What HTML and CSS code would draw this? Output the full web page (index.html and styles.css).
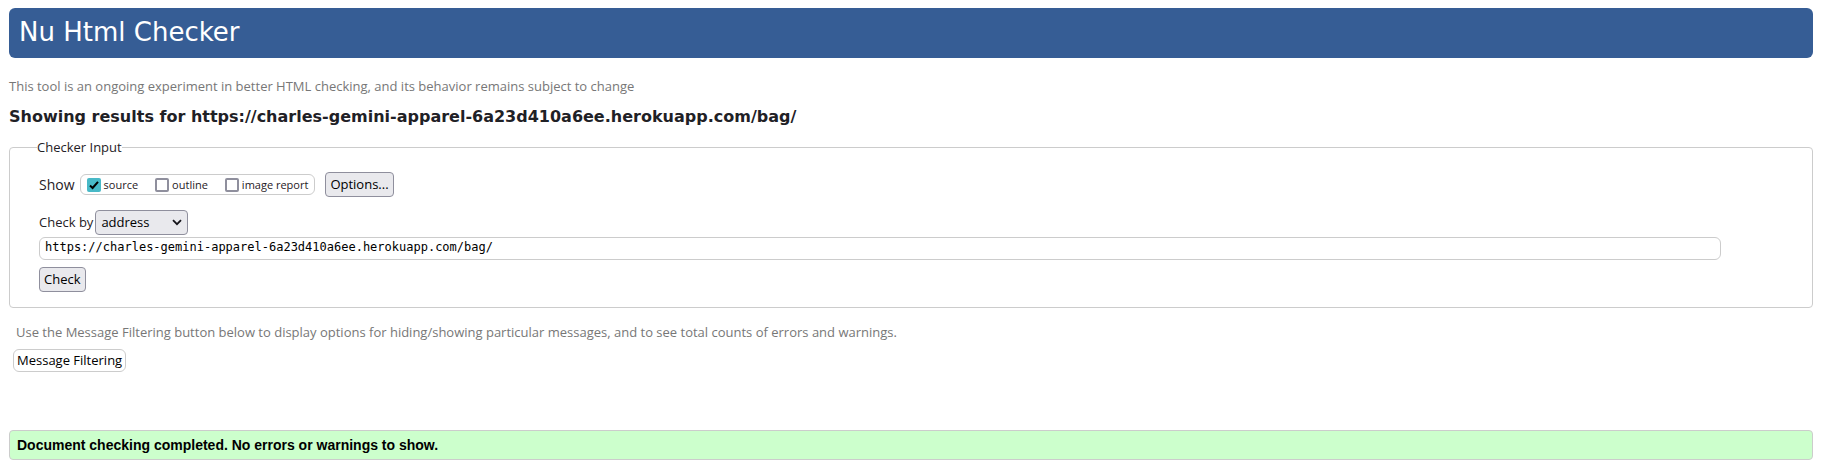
FILE: index.html
```html
<!DOCTYPE html>
<html lang="en">
<head>
<meta charset="utf-8">
<title>Nu Html Checker</title>
<link rel="stylesheet" href="styles.css">
</head>
<body>
<header class="banner"><h1 class="banner-title">Nu Html Checker</h1></header>
<p class="note">This tool is an ongoing experiment in better HTML checking, and its behavior remains subject to change</p>
<h2 class="results-title">Showing results for https://charles-gemini-apparel-6a23d410a6ee.herokuapp.com/bag/</h2>
<form>
  <fieldset class="checker">
    <legend class="legend">Checker Input</legend>
    <div class="show-row">
      <span class="show-label">Show</span>
      <div class="checks">
        <label class="check"><input class="box" type="checkbox" checked>source</label>
        <label class="check"><input class="box" type="checkbox">outline</label>
        <label class="check"><input class="box" type="checkbox">image report</label>
      </div>
      <button class="button" type="button">Options...</button>
    </div>
    <div class="method-row">
      <label for="method">Check by</label>
      <div class="select-wrap">
        <select class="select" id="method"><option>address</option><option>file upload</option><option>text input</option></select>
        <svg class="chevron" viewBox="0 0 10 7" aria-hidden="true"><path d="M1 1.2 5 5.2 9 1.2" fill="none" stroke="#15141a" stroke-width="1.8"/></svg>
      </div>
    </div>
    <input class="address" type="url" aria-label="Address" value="https://charles-gemini-apparel-6a23d410a6ee.herokuapp.com/bag/">
    <button class="button" type="button">Check</button>
  </fieldset>
</form>
<main>
  <p class="note note-filter">Use the Message Filtering button below to display options for hiding/showing particular messages, and to see total counts of errors and warnings.</p>
  <button class="filter-button" type="button">Message Filtering</button>
  <p class="success">Document checking completed. No errors or warnings to show.</p>
</main>
</body>
</html>
```
FILE: styles.css
```css
* { box-sizing: border-box; }
body {
  margin: 8px 8px 8px 9px;
  background: #fff;
  color: #1f2126;
  font: 13px/19px "Open Sans", "Noto Sans", sans-serif;
}
button, input, select { font: inherit; margin: 0; }
.banner {
  padding: 9px 10px 11px;
  border-radius: 6px;
  background: #365d95;
}
.banner-title {
  margin: 0;
  color: #fff;
  font: 26px/30px "DejaVu Sans", sans-serif;
}
.note { margin: 19px 0 0; color: #777; }
.results-title {
  margin: 11px 0 0;
  font: bold 16px/20px "DejaVu Sans", sans-serif;
}
.checker {
  min-width: 0;
  margin: 11px 0 0;
  padding: 15px 3px 15px 29px;
  border: 1px solid #ccc;
  border-radius: 4px;
}
.legend { margin-left: -2px; padding: 0; }
.show-row { display: flex; align-items: center; }
.show-label { font-size: 14px; }
.checks {
  display: flex;
  align-items: center;
  gap: 17px;
  margin: 0 10px 0 5px;
  padding: 2px 6px;
  border: 1px solid #ccc;
  border-radius: 6px;
  font-size: 11px;
  line-height: 15px;
}
.check { display: flex; align-items: center; gap: 3px; }
.box {
  appearance: none;
  width: 14px;
  height: 14px;
  border: 2px solid #8f8f9d;
  border-radius: 2px;
  background: #fff;
}
.box:checked {
  border: 0;
  background: #48b9c7 url("data:image/svg+xml,%3Csvg xmlns='http://www.w3.org/2000/svg' viewBox='0 0 14 14'%3E%3Cpath d='M3 7.5 5.6 10 11 3.8' fill='none' stroke='%23000' stroke-width='2'/%3E%3C/svg%3E");
}
.button {
  display: block;
  padding: 2px 4px;
  border: 1px solid #8f8f9d;
  border-radius: 4px;
  background: #e9e9ed;
  color: #000;
}
.method-row { display: flex; align-items: center; gap: 2px; margin-top: 13px; }
.select-wrap { position: relative; }
.select {
  appearance: none;
  display: block;
  padding: 2px 22px 2px 5px;
  border: 1px solid #8f8f9d;
  border-radius: 4px;
  background: #e9e9ed;
  color: #000;
}
.chevron {
  position: absolute;
  top: 9px;
  right: 6px;
  width: 10px;
  height: 7px;
  pointer-events: none;
}
.address {
  display: block;
  width: 95%;
  margin: 2px 0 7px;
  padding: 0 5px 2px;
  border: 1px solid #ccc;
  border-radius: 6px;
  background: #fff;
  color: #000;
  font: 12px/19px "DejaVu Sans Mono", monospace;
}
.note-filter { margin: 15px 0 0 7px; }
.filter-button {
  display: block;
  margin: 7px 0 0 4px;
  padding: 1px 3px;
  border: 1px solid #ccc;
  border-radius: 6px;
  background: #fff;
  color: #000;
}
.success {
  margin: 58px 0 0;
  padding: 4px 7px;
  border: 1px solid #ccc;
  border-radius: 4px;
  background: #cfc;
  color: #000;
  font: bold 14px/20px "Liberation Sans", sans-serif;
}
```
